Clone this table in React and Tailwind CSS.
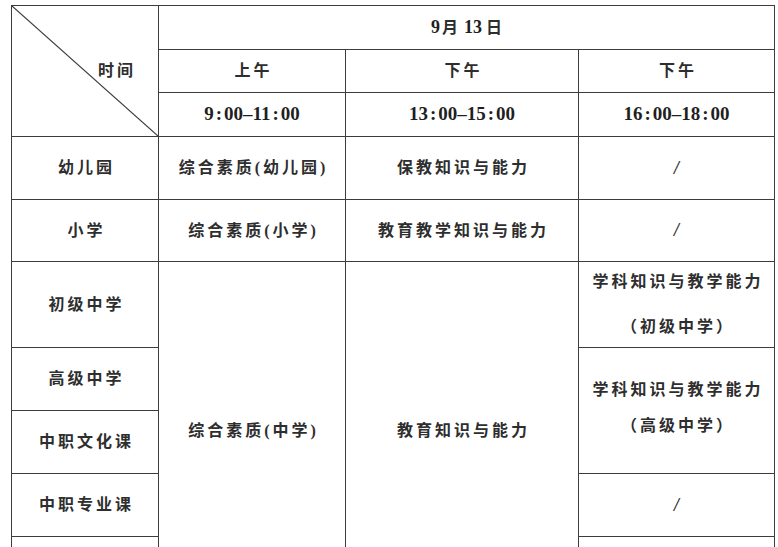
export default function App() {
  const cell = 'border border-[#3c3c3c] text-center align-middle p-0';
  const cjk = 'tracking-[3px] pl-[3px]';

  const Time = ({ from, to }) => {
    const part = (t) => {
      const [h, m] = t.split(':');
      return (
        <>
          {h}
          <span className="mx-[2px]">:</span>
          {m}
        </>
      );
    };
    return (
      <span className="text-[19px] text-[#1f1f1f]">
        {part(from)}–{part(to)}
      </span>
    );
  };

  return (
    <div className="w-[778px] h-[547px] overflow-hidden bg-white text-[#2e2e2e] font-['Liberation_Serif','Noto_Sans_CJK_SC',serif] font-bold text-[16px]">
      <table className="ml-[11px] mt-[5px] w-[763px] table-fixed border-collapse">
        <colgroup>
          <col className="w-[147px]" />
          <col className="w-[187px]" />
          <col className="w-[233px]" />
          <col className="w-[196px]" />
        </colgroup>
        <tbody>
          <tr className="h-[44px]">
            <td rowSpan={3} className={`${cell} relative`}>
              {/* diagonal split of the corner cell */}
              <svg className="absolute inset-0 w-full h-full" preserveAspectRatio="none" viewBox="0 0 100 100">
                <line x1="0" y1="0" x2="100" y2="100" stroke="#3c3c3c" strokeWidth="1.2" vectorEffect="non-scaling-stroke" />
              </svg>
              <div className={`text-right pr-[22px] ${cjk}`}>时间</div>
            </td>
            <td colSpan={3} className={cell}>
              <span className="text-[18px] text-[#1f1f1f]">9</span>
              <span className="ml-[2px]">月</span>
              <span className="ml-[6px] text-[18px] text-[#1f1f1f]">13</span>
              <span className="ml-[4px]">日</span>
            </td>
          </tr>
          <tr className="h-[43px]">
            <td className={`${cell} ${cjk}`}>上午</td>
            <td className={`${cell} ${cjk}`}>下午</td>
            <td className={`${cell} ${cjk}`}>下午</td>
          </tr>
          <tr className="h-[44px]">
            <td className={cell}><Time from="9:00" to="11:00" /></td>
            <td className={cell}><Time from="13:00" to="15:00" /></td>
            <td className={cell}><Time from="16:00" to="18:00" /></td>
          </tr>
          <tr className="h-[63px]">
            <td className={`${cell} ${cjk}`}>幼儿园</td>
            <td className={`${cell} ${cjk}`}>综合素质(幼儿园)</td>
            <td className={`${cell} ${cjk}`}>保教知识与能力</td>
            <td className={`${cell} text-[18px] italic`}>/</td>
          </tr>
          <tr className="h-[62px]">
            <td className={`${cell} ${cjk}`}>小学</td>
            <td className={`${cell} ${cjk}`}>综合素质(小学)</td>
            <td className={`${cell} ${cjk}`}>教育教学知识与能力</td>
            <td className={`${cell} text-[18px] italic`}>/</td>
          </tr>
          <tr className="h-[86px]">
            <td className={`${cell} ${cjk}`}>初级中学</td>
            <td rowSpan={5} className={`${cell} ${cjk}`}>综合素质(中学)</td>
            <td rowSpan={5} className={`${cell} ${cjk}`}>教育知识与能力</td>
            <td className={cell}>
              <div className="flex flex-col items-center gap-[25px] leading-[20px]">
                <span className={cjk}>学科知识与教学能力</span>
                <span className={cjk}>（初级中学）</span>
              </div>
            </td>
          </tr>
          <tr className="h-[63px]">
            <td className={`${cell} ${cjk}`}>高级中学</td>
            <td rowSpan={2} className={cell}>
              <div className="flex flex-col items-center gap-[16px] leading-[20px] pb-[6px]">
                <span className={cjk}>学科知识与教学能力</span>
                <span className={cjk}>（高级中学）</span>
              </div>
            </td>
          </tr>
          <tr className="h-[63px]">
            <td className={`${cell} ${cjk}`}>中职文化课</td>
          </tr>
          <tr className="h-[63px]">
            <td className={`${cell} ${cjk}`}>中职专业课</td>
            <td className={`${cell} text-[18px] italic`}>/</td>
          </tr>
          <tr className="h-[63px]">
            <td className={cell}></td>
            <td className={cell}></td>
          </tr>
        </tbody>
      </table>
    </div>
  );
}
